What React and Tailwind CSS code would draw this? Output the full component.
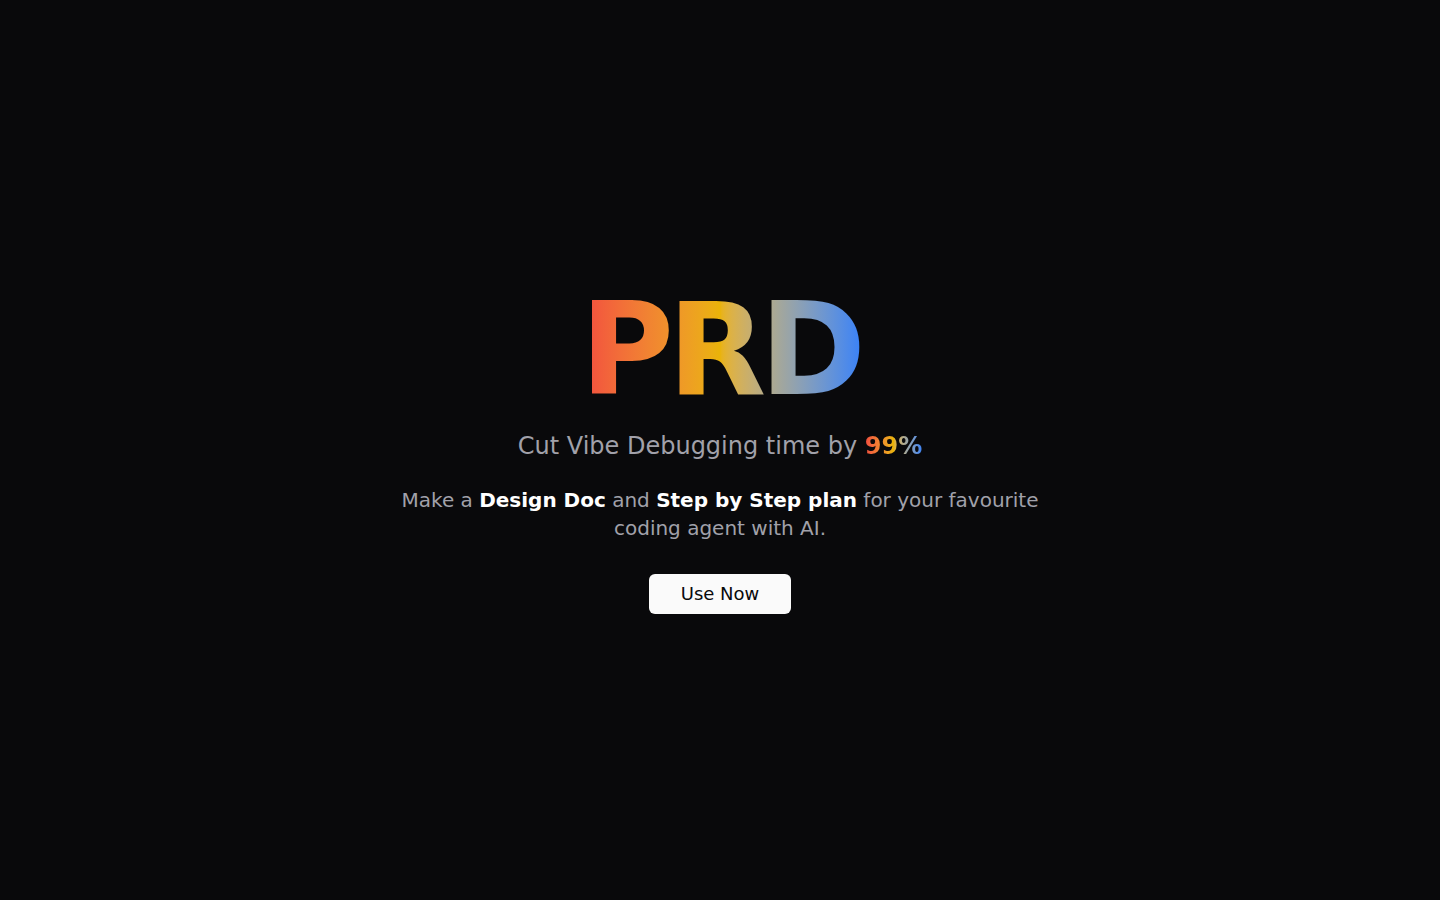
import React from "react";

const App = () => {
  return (
    <div
      className="min-h-screen bg-[#09090b] flex flex-col items-center justify-center text-center px-6"
      style={{ fontFamily: '"DejaVu Sans", sans-serif' }}
    >
      {/* Big gradient logo */}
      <h1 className="text-9xl font-bold tracking-tighter leading-none bg-gradient-to-r from-[#f24a3f] via-[#eab308] to-[#3b82f6] bg-clip-text text-transparent">
        PRD
      </h1>

      {/* Tagline */}
      <p className="mt-4 text-2xl text-[#a1a1aa]">
        Cut Vibe Debugging time by{" "}
        <span className="font-bold bg-gradient-to-r from-[#f24a3f] via-[#eab308] to-[#3b82f6] bg-clip-text text-transparent">
          99%
        </span>
      </p>

      {/* Description */}
      <p className="mt-6 max-w-2xl text-xl leading-7 text-[#a1a1aa]">
        Make a <span className="font-bold text-white">Design Doc</span> and{" "}
        <span className="font-bold text-white">Step by Step plan</span> for your
        favourite coding agent with AI.
      </p>

      <button className="mt-8 rounded-md bg-[#fafafa] px-8 py-1.5 text-lg text-[#09090b]">
        Use Now
      </button>
    </div>
  );
};

export default App;
